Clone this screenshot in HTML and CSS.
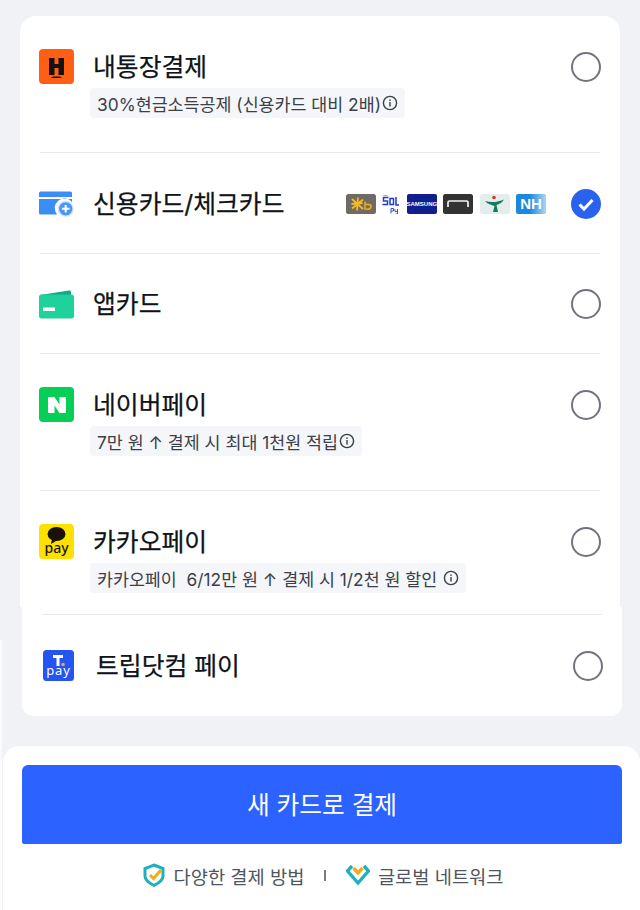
FILE: index.html
```html
<!DOCTYPE html>
<html lang="ko">
<head>
<meta charset="utf-8">
<title>결제</title>
<link rel="stylesheet" href="styles.css">
</head>
<body>
<main class="page">
  <div class="edge"></div>
  <section class="card card-main">
    <div class="row row-tall">
      <div class="row-head">
        <svg class="icon" viewBox="0 0 35 35"><rect width="35" height="35" rx="4" fill="#ff5f14"/><path d="M10 9h5.500v6h4V9H25v17h-5.500v-7h-4v7H10z" fill="#17100c"/><path d="M14 27.500h7l2 1.500H12z" fill="#17100c"/></svg>
        <span class="title">내통장결제</span>
        <span class="radio"></span>
      </div>
      <div class="tag">30%현금소득공제 (신용카드 대비 2배)<svg class="info" viewBox="0 0 16 16"><circle cx="8" cy="8" r="6.600" fill="none" stroke="#3b3f48" stroke-width="1.400"/><rect x="7.300" y="7" width="1.400" height="4.600" fill="#3b3f48"/><rect x="7.300" y="4.400" width="1.400" height="1.500" fill="#3b3f48"/></svg></div>
    </div>
    <div class="row row-short">
      <div class="row-head">
        <svg class="icon" viewBox="0 0 35 35"><path d="M1.500 5.500h30a1.500 1.500 0 0 1 1.500 1.500v4H0V7a1.500 1.500 0 0 1 1.500-1.500z" fill="#3d8ef4"/><path d="M0 13h33v3a9 9 0 0 0-15 12.500H1.500A1.500 1.500 0 0 1 0 27z" fill="#3d8ef4"/><circle cx="26.700" cy="22.800" r="7.300" fill="#4c97f5" stroke="#cfe2fb" stroke-width="1.300"/><path d="M26.700 19v7.600M22.900 22.800h7.600" stroke="#fff" stroke-width="2"/></svg>
        <span class="title">신용카드/체크카드</span>
        <div class="banks">
          <svg class="bank" viewBox="0 0 30 20"><rect width="30" height="20" rx="1.500" fill="#6f6b64"/><path d="M12 3.500l-1 13M6 5l11 10M17 5.500L6 14.500M5.500 10l11-1" stroke="#f5b921" stroke-width="1.800"/><path d="M19 7.500v7.500q5 1 6-2t-5-2.500" fill="none" stroke="#e8a91f" stroke-width="1.700"/></svg>
          <svg class="bank bank-sol" viewBox="0 0 18 20"><path d="M1.500 1.500h4" stroke="#8ba5ea" stroke-width="1"/><path d="M6.500 3.500H1.500v3.500h4v3.500H.5M8 4.500h3.500v6H8zM14 3v8h3" fill="none" stroke="#1f3fc4" stroke-width="1.500"/><path d="M9 14.500v5M9 14.500h2.500v2.500H9M13 15v2.500h2.500V15M15.500 15v5h-2" fill="none" stroke="#3355cc" stroke-width="1"/></svg>
          <div class="bank bank-samsung">SAMSUNG</div>
          <svg class="bank" viewBox="0 0 30 20"><rect width="30" height="20" rx="1.500" fill="#333"/><path d="M5 13V8.500A1.500 1.500 0 0 1 6.500 7h17A1.500 1.500 0 0 1 25 8.500V13" fill="none" stroke="#f4f4f4" stroke-width="1.700"/></svg>
          <svg class="bank" viewBox="0 0 30 20"><rect width="30" height="20" rx="1.500" fill="#e3eeec"/><circle cx="14" cy="3.500" r="1.800" fill="#d8363a"/><path d="M5 7c6 2 14 1 19-1.500-2 3.500-5 4.500-7.500 5.500l1.500 7h-5l1.500-6c-3-1-7-2-9.500-5z" fill="#127c5e"/></svg>
          <div class="bank bank-nh">NH</div>
        </div>
        <span class="radio radio-on"><svg viewBox="0 0 30 30"><path d="M8.500 15.500l4.500 4.500 8.500-9" fill="none" stroke="#fff" stroke-width="3"/></svg></span>
      </div>
    </div>
    <div class="row row-short">
      <div class="row-head">
        <svg class="icon" viewBox="0 0 35 35"><path d="M1 8L30 3.500q2-.3 2 1.500V9z" fill="#10a98a"/><rect y="7.500" width="35" height="24" rx="2.500" fill="#1fd19a"/><rect x="4" y="20.500" width="12" height="3.500" fill="#fff"/></svg>
        <span class="title">앱카드</span>
        <span class="radio"></span>
      </div>
    </div>
    <div class="row row-tall">
      <div class="row-head">
        <svg class="icon" viewBox="0 0 35 35"><rect width="35" height="35" rx="4" fill="#06cf58"/><path d="M9 10h6.500l5 7.500V10H27v16h-6.500l-5-7.500V26H9z" fill="#fff"/></svg>
        <span class="title">네이버페이</span>
        <span class="radio"></span>
      </div>
      <div class="tag">7만 원 ↑ 결제 시 최대 1천원 적립<svg class="info" viewBox="0 0 16 16"><circle cx="8" cy="8" r="6.600" fill="none" stroke="#3b3f48" stroke-width="1.400"/><rect x="7.300" y="7" width="1.400" height="4.600" fill="#3b3f48"/><rect x="7.300" y="4.400" width="1.400" height="1.500" fill="#3b3f48"/></svg></div>
    </div>
    <div class="row row-kakao">
      <div class="row-head">
        <svg class="icon" viewBox="0 0 35 35"><rect width="35" height="35" rx="4" fill="#ffe100"/><ellipse cx="17.500" cy="10" rx="9" ry="7" fill="#17130c"/><path d="M13 15l-1 5 5-3z" fill="#17130c"/><text class="kakao-pay" x="17.500" y="29" text-anchor="middle">pay</text></svg>
        <span class="title">카카오페이</span>
        <span class="radio"></span>
      </div>
      <div class="tag">카카오페이&nbsp; 6/12만 원 ↑ 결제 시 1/2천 원 할인<svg class="info info-gap" viewBox="0 0 16 16"><circle cx="8" cy="8" r="6.600" fill="none" stroke="#3b3f48" stroke-width="1.400"/><rect x="7.300" y="7" width="1.400" height="4.600" fill="#3b3f48"/><rect x="7.300" y="4.400" width="1.400" height="1.500" fill="#3b3f48"/></svg></div>
    </div>
  </section>
  <section class="card card-extra">
    <div class="row row-last">
      <div class="row-head">
        <svg class="icon icon-t" viewBox="0 0 31 31"><rect width="31" height="31" rx="3.500" fill="#2554f0"/><path d="M10 5h10v3h-3.500v8h-3V8H10z" fill="#fff"/><circle cx="20" cy="14.500" r="1.800" fill="#e3a857"/><text class="t-pay" x="15.500" y="25" text-anchor="middle">pay</text></svg>
        <span class="title">트립닷컴 페이</span>
        <span class="radio"></span>
      </div>
    </div>
  </section>
  <footer class="sheet">
    <button class="pay-btn" type="button"><span class="pay-label">새 카드로 결제</span></button>
    <div class="assure">
      <span class="assure-item"><svg class="shield" viewBox="0 0 24 24"><path d="M12 2l9 3.500V13c0 4-4 7-9 9.500C7 20 3 17 3 13V5.500z" fill="none" stroke="#1fb0bd" stroke-width="3"/><path d="M8 12l3.500 3.500L19 7" fill="none" stroke="#f5a91d" stroke-width="3"/></svg>다양한 결제 방법</span>
      <span class="bar"></span>
      <span class="assure-item"><svg class="shield" viewBox="0 0 24 24"><path d="M6 3L1.500 8 12 20 22.500 8 18 3" fill="none" stroke="#1fb0bd" stroke-width="3.400"/><path d="M7.500 5l4.500 5 4.500-5" fill="none" stroke="#f5a91d" stroke-width="3.400"/></svg>글로벌 네트워크</span>
    </div>
  </footer>
</main>
</body>
</html>
```

FILE: styles.css
```css
* { box-sizing: border-box; }
html, body { margin: 0; padding: 0; }
body {
  background: #f0f2f6;
  font-family: Inter, "Noto Sans CJK KR", "Noto Sans", sans-serif;
  color: #0f131a;
}
.page { position: relative; width: 640px; height: 910px; overflow: hidden; padding-top: 16px; display: flex; flex-direction: column; }
.edge { position: absolute; left: 0; top: 640px; bottom: 0; width: 2px; background: #fafbfc; }
.card { background: #fff; width: 600px; padding: 0 20px; }
.card-main { margin-left: 20px; border-radius: 16px 16px 0 0; height: 591px; }
.card-extra { margin-left: 22px; border-radius: 0 0 12px 12px; height: 109px; padding-top: 7px; }
.row { border-bottom: 1px solid #e9ebee; }
.row-tall { height: 137px; padding-top: 33px; }
.row-short { height: 100.500px; padding-top: 33px; }
.row-kakao { height: 124px; padding-top: 33px; }
.row-last { border-bottom: 0; border-top: 1px solid #e9ebee; padding-top: 33px; }
.row-head { display: flex; align-items: center; height: 35px; }
.icon { width: 35px; height: 35px; flex: none; margin: 0 19px 0 -1px; display: block; }
.icon-t { width: 31px; height: 31px; margin: 0 22px 0 1px; }
.title { font-size: 24.800px; font-weight: 400; line-height: 35px; flex: 1; margin-top: 1px; -webkit-text-stroke: .25px #0f131a; }
.radio { width: 30px; height: 30px; border: 2.500px solid #70747c; border-radius: 50%; flex: none; margin-right: -1px; }
.radio-on { background: #2a62f0; border: 0; }
.radio-on svg { display: block; width: 30px; height: 30px; }
.banks { display: flex; gap: 6.500px; margin: 1px 25px 0 0; align-items: center; }
.bank { width: 30px; height: 20px; display: block; border-radius: 2px; }
.bank-sol { width: 18px; }
.bank-samsung { background: #101f8c; color: #fff; font: 700 6px/20px "Liberation Sans", sans-serif; text-align: center; }
.bank-nh { background: linear-gradient(90deg, #1b87dd 45%, #a9d6f5); color: #fff; font: 700 15px/20px "Liberation Sans", sans-serif; text-align: center; }
.tag {
  display: inline-flex; align-items: center;
  height: 30px; margin: 4px 0 0 50px; padding: 0 7px;
  background: #f5f6fa; border-radius: 4px;
  font-size: 17.350px; color: #3b3f48; white-space: nowrap;
}
.info { width: 16px; height: 16px; margin-left: 1px; flex: none; }
.info-gap { margin-left: 6px; }
.kakao-pay { font: 500 14px "Noto Sans", sans-serif; fill: #17130c; }
.t-pay { font: 400 13px "Noto Sans", sans-serif; fill: #fff; letter-spacing: .8px; }
.sheet { margin: 30px 0 0 3px; flex: 1; background: #fff; border-radius: 16px 16px 0 0; padding: 19px 18px 0 19px; }
.pay-btn {
  display: block; width: 600px; height: 79px; border: 0; border-radius: 6px 6px 2px 2px;
  background: #2c62ff; color: #fff; font: 400 24.700px Inter, "Noto Sans CJK KR", sans-serif; padding: 0 0 4px;
}
.assure { display: flex; justify-content: center; align-items: center; margin-top: 19px; height: 24px; padding-left: 1px; }
.assure-item { display: flex; align-items: center; gap: 8px; font-size: 18.700px; color: #50555e; }
.shield { width: 24px; height: 24px; flex: none; }
.bar { width: 1.500px; height: 11px; background: #777b83; margin: 0 20px; }
```
